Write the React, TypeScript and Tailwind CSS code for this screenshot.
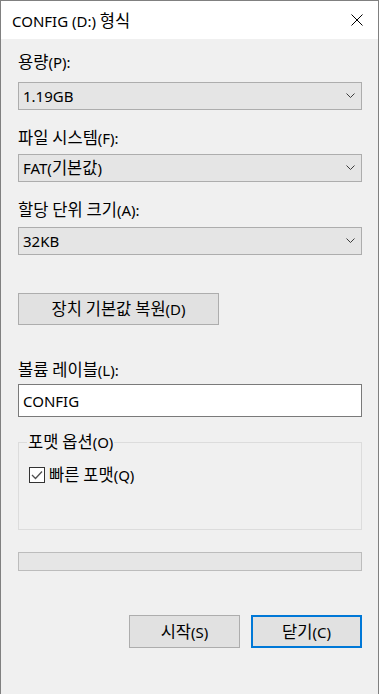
const font = { fontFamily: '"Noto Sans", "Noto Sans CJK KR", sans-serif' };

// Hangul runs are set a little larger so they read like Malgun Gothic next to the Latin text
const T = ({ s }: { s: string }) => (
  <>
    {s.split(/([\uAC00-\uD7A3]+)/).map((part, i) =>
      /[\uAC00-\uD7A3]/.test(part) ? (
        <span key={i} className="text-[16.5px] leading-[20px]">
          {part}
        </span>
      ) : (
        <span key={i}>{part}</span>
      )
    )}
  </>
);

const Chevron = () => (
  <svg width="10" height="6" viewBox="0 0 10 6" fill="none" className="shrink-0">
    <path d="M0.5 0.5 L4.5 4.5 L8.5 0.5" stroke="#3c3c3c" strokeWidth="1" />
  </svg>
);

const Select = ({ value, className = '' }: { value: string; className?: string }) => (
  <div
    className={`flex h-[28px] items-center justify-between border border-[#adadad] bg-[#e5e5e5] pl-[4px] pr-[5px] text-[15px] text-black ${className}`}
  >
    <span className="leading-[20px]">
      <T s={value} />
    </span>
    <Chevron />
  </div>
);

const Label = ({ text, className = '' }: { text: string; className?: string }) => (
  <div className={`text-[15px] leading-[20px] text-black ${className}`}>
    <T s={text} />
  </div>
);

export default function App() {
  return (
    <div
      className="h-[694px] w-[379px] overflow-hidden border-x border-t border-[#808080] bg-[#f0f0f0] text-black"
      style={font}
    >
      {/* title bar */}
      <div className="flex h-[38px] items-center justify-between bg-white pl-[11px] pr-[15px]">
        <span className="pt-[2px] text-[15px] leading-[20px]">
          CONFIG (D:) <T s="형식" />
        </span>
        <svg width="12" height="12" viewBox="0 0 12 12" fill="none">
          <path d="M0.5 0.5 L11.5 11.5 M11.5 0.5 L0.5 11.5" stroke="#000" strokeWidth="1" />
        </svg>
      </div>

      <div className="flex flex-col pl-[17px] pr-[16px] pt-[13px]">
        <Label text="용량(P):" />
        <Select value="1.19GB" className="mt-[10px]" />

        <Label text="파일 시스템(F):" className="mt-[18px]" />
        <Select value="FAT(기본값)" className="mt-[6px]" />

        <Label text="할당 단위 크기(A):" className="mt-[18px]" />
        <Select value="32KB" className="mt-[7px]" />

        <button
          className="mt-[38px] h-[32px] w-[201px] border border-[#adadad] bg-[#e1e1e1] text-[15px] leading-[20px]"
          style={font}
        >
          <T s="장치 기본값 복원(D)" />
        </button>

        <Label text="볼륨 레이블(L):" className="mt-[35px]" />
        <div className="mt-[4px] flex h-[33px] items-center border border-[#7a7a7a] bg-white pl-[4px] text-[15px] leading-[20px]">
          CONFIG
        </div>

        {/* format options group */}
        <div className="relative mt-[25px] h-[88px] border border-[#dcdcdc] pl-[10px] pt-[22px]">
          <span className="absolute left-[8px] top-[-11px] bg-[#f0f0f0] px-[1px] text-[15px] leading-[20px]">
            <T s="포맷 옵션(O)" />
          </span>
          <div className="flex h-[20px] items-center gap-[4px]">
            <div className="flex h-[16px] w-[16px] items-center justify-center border border-[#333] bg-white">
              <svg width="12" height="10" viewBox="0 0 12 10" fill="none">
                <path d="M1 5 L4.5 8.5 L11 1.5" stroke="#505050" strokeWidth="1.3" />
              </svg>
            </div>
            <span className="text-[15px] leading-[20px]">
              <T s="빠른 포맷(Q)" />
            </span>
          </div>
        </div>

        {/* progress bar */}
        <div className="mt-[22px] h-[19px] border border-[#bcbcbc] bg-[#e6e6e6]" />

        <div className="mt-[44px] flex justify-end gap-[11px]">
          <button
            className="h-[33px] w-[111px] border border-[#adadad] bg-[#e1e1e1] text-[15px] leading-[20px]"
            style={font}
          >
            <T s="시작(S)" />
          </button>
          <button
            className="h-[33px] w-[111px] border-2 border-[#0078d7] bg-[#e1e1e1] text-[15px] leading-[20px]"
            style={font}
          >
            <T s="닫기(C)" />
          </button>
        </div>
      </div>
    </div>
  );
}
